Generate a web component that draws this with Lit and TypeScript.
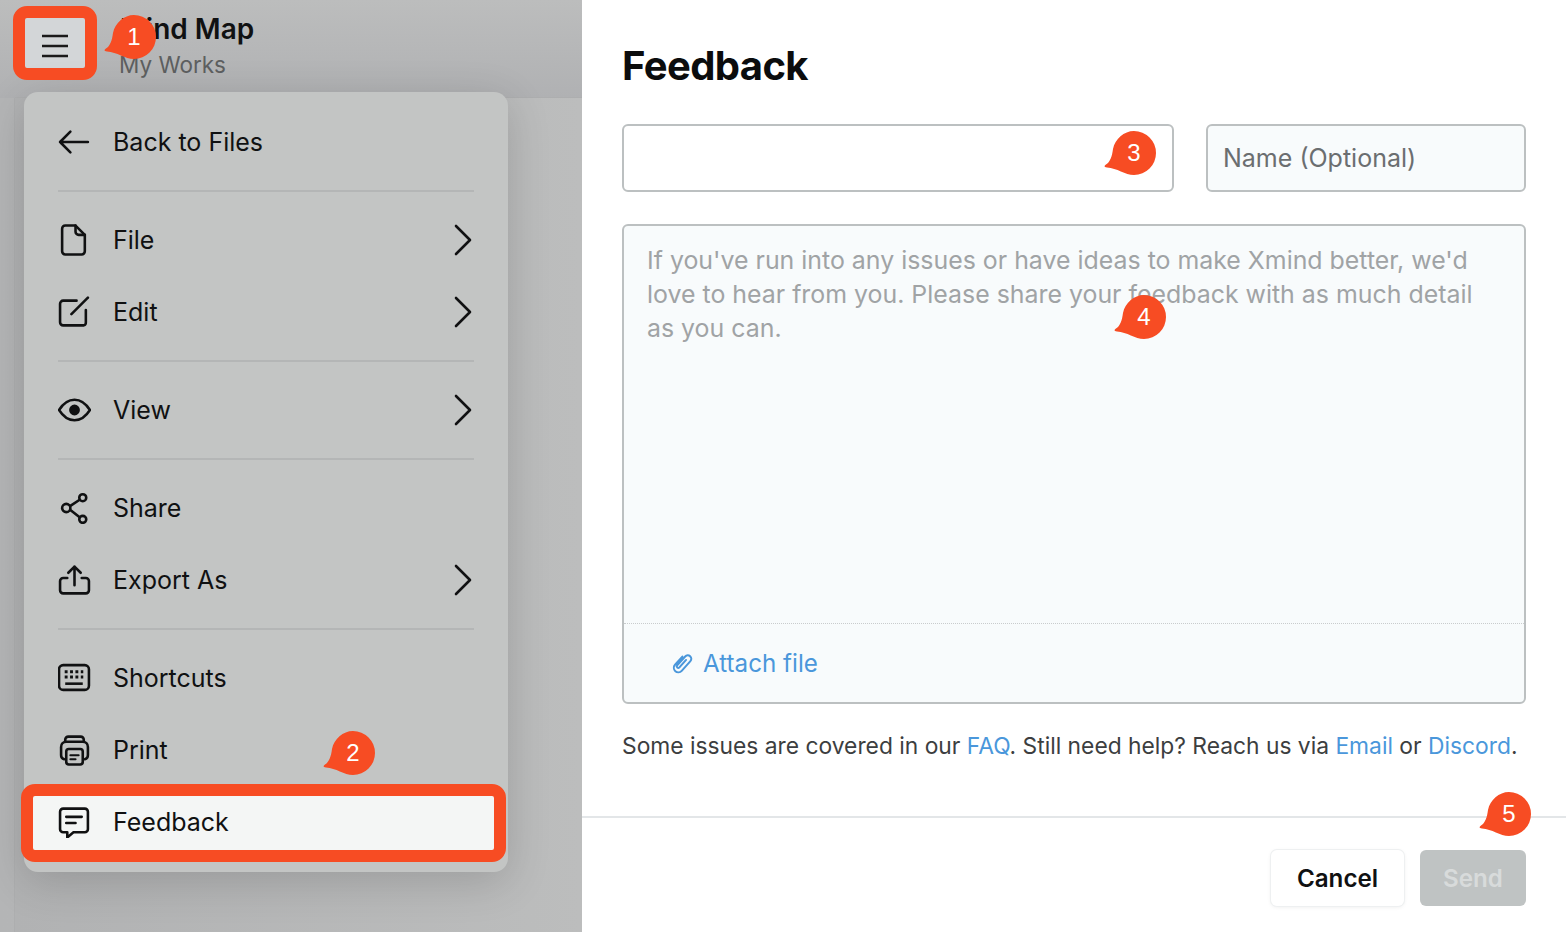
import { LitElement, html, css, svg } from 'lit';
import { customElement, property } from 'lit/decorators.js';

const icons: Record<string, unknown> = {
  back: svg`<path d="M2 15h27M12 5 2 15l10 10" />`,
  file: svg`<path d="M7 1h10l9 9v16a3 3 0 0 1-3 3H7a3 3 0 0 1-3-3V4a3 3 0 0 1 3-3Z" /><path d="M17 1v6a3 3 0 0 0 3 3h6" />`,
  edit: svg`<path d="M18 4H5a3 3 0 0 0-3 3v18a3 3 0 0 0 3 3h20a3 3 0 0 0 2-3V13" /><path d="M13 17 29 1" />`,
  view: svg`<path d="M1 15C6 7 11 5 16 5s10 2 15 10c-5 8-10 10-15 10S6 23 1 15Z" /><circle cx="16" cy="15" r="4" fill="currentColor" />`,
  share: svg`<circle cx="24" cy="5" r="3.4" /><circle cx="8" cy="15" r="4" /><circle cx="24" cy="26" r="3.4" /><path d="m12 13 9-6M12 17l9 7" />`,
  export: svg`<path d="M9 13H5a3 3 0 0 0-3 3v9a3 3 0 0 0 3 3h22a3 3 0 0 0 3-3v-9a3 3 0 0 0-3-3h-4" /><path d="M16 20V2M10 8l6-6 6 6" />`,
  keyboard: svg`<rect x="1" y="2.500" width="29" height="24" rx="4" /><path d="M7 20.500h17" stroke-width="2.500" stroke-linecap="butt" /><path d="M6.500 9h18M6.500 14h18" stroke-width="2.800" stroke-linecap="butt" stroke-dasharray="2.800 2.400" />`,
  print: svg`<path d="M7 7V5a3 3 0 0 1 3-3h12a3 3 0 0 1 3 3v2" /><path d="M6 24a4 4 0 0 1-3-4v-8a5 5 0 0 1 5-5h16a5 5 0 0 1 5 5v8a4 4 0 0 1-3 4" /><rect x="8" y="14" width="16" height="15" rx="2.500" /><path d="M12 20h8M12 24h5" stroke-width="2" />`,
  feedback: svg`<path d="M5 2h21a3 3 0 0 1 3 3v17a3 3 0 0 1-3 3H15l-6 5v-5H5a3 3 0 0 1-3-3V5a3 3 0 0 1 3-3Z" /><path d="M8 10h15M8 16h9" />`,
};

@customElement('tip-badge')
class TipBadge extends LitElement {
  @property() label = '';

  static styles = css`
    :host {
      position: absolute;
      display: block;
      width: 54px;
      height: 46px;
      font-family: 'Liberation Sans', sans-serif;
      z-index: 5;
    }
    svg {
      position: absolute;
      inset: 0;
      width: 54px;
      height: 46px;
    }
    span {
      position: absolute;
      left: 8px;
      top: 0;
      width: 44px;
      height: 44px;
      display: flex;
      align-items: center;
      justify-content: center;
      color: #fff;
      font-size: 24px;
    }
  `;

  render() {
    return html`
      <svg viewBox="0 0 54 46">
        <path
          fill="#f74c23"
          d="M30 0A22 22 0 1 1 30 44C21 44 13 37 3 36.500C0 36.300 0 35 2 33.500C6 31 8 26 9 18C11 8 20 0 30 0Z"
        />
      </svg>
      <span>${this.label}</span>
    `;
  }
}

@customElement('app-root')
class AppRoot extends LitElement {
  static styles = css`
    :host {
      display: block;
      position: relative;
      width: 1566px;
      height: 932px;
      overflow: hidden;
      font-family: 'Inter', 'Liberation Sans', sans-serif;
      background: #fff;
    }

    * {
      box-sizing: border-box;
    }

    .page {
      display: grid;
      grid-template-columns: 582px minmax(0, 1fr);
      height: 932px;
    }

    /* Left side, dimmed by the dialog */
    .side {
      display: flex;
      flex-direction: column;
      background: linear-gradient(90deg, #b4b5b6 0%, #b7b8b9 60%, #bcbdbd 100%);
      overflow: hidden;
    }

    .head {
      height: 98px;
      flex: none;
      display: flex;
      gap: 23px;
      padding: 18px 0 0 25px;
      background: linear-gradient(180deg, #bcbdbd, #b0b1b3);
    }

    .menu-btn {
      width: 60px;
      height: 51px;
      padding-top: 4px;
      background: #d3d6d8;
      display: flex;
      align-items: center;
      justify-content: center;
    }

    .menu-btn svg {
      width: 28px;
      height: 24px;
      stroke: #1a1a1a;
      stroke-width: 2.400;
      fill: none;
    }

    .doc-title {
      font-size: 28px;
      font-weight: 600;
      line-height: 34px;
      margin-top: -6px;
      padding-left: 12px;
      color: #101112;
      white-space: nowrap;
    }

    .doc-sub {
      font-size: 22.500px;
      line-height: 34px;
      padding-left: 11px;
      color: #5d5f60;
      margin-top: 2px;
      white-space: nowrap;
    }

    .body {
      flex: 1;
      margin-left: 15px;
      background: linear-gradient(90deg, #b1b2b3, #bcbdbd);
      box-shadow: -1px 0 0 #adaeaf, 0 -1px 0 #adaeaf;
    }

    .card {
      position: absolute;
      left: 24px;
      top: 92px;
      width: 484px;
      height: 780px;
      padding: 14px 0;
      background: #c3c5c4;
      border-radius: 14px;
      box-shadow: 0 10px 44px rgba(0, 0, 0, 0.16);
    }

    .row {
      height: 72px;
      display: flex;
      align-items: center;
      padding: 0 34px;
      font-size: 25px;
      color: #101112;
    }

    .row .ic {
      width: 33px;
      height: 32px;
      margin-right: 22px;
      flex: none;
      fill: none;
      stroke: #101112;
      stroke-width: 2.500;
      stroke-linecap: round;
      stroke-linejoin: round;
    }

    .row .label {
      flex: 1;
    }

    .row .chev {
      width: 20px;
      height: 34px;
      fill: none;
      stroke: #101112;
      stroke-width: 2.600;
      stroke-linecap: round;
      stroke-linejoin: round;
    }

    .sep {
      height: 2px;
      margin: 12px 34px;
      background: #b4b6b6;
    }

    .hl {
      position: absolute;
      border: 12px solid #f74c23;
      pointer-events: none;
    }

    .hl.menu {
      left: 13px;
      top: 6px;
      width: 84px;
      height: 74px;
      border-radius: 14px;
    }

    .hl.item {
      left: 21px;
      top: 784px;
      width: 485px;
      height: 78px;
      border-radius: 14px;
    }

    .row.active {
      background: #f4f6f5;
      margin: 8px 14px 8px 9px;
      height: 56px;
      padding: 0 25px;
    }

    /* Feedback dialog */
    .dialog {
      display: flex;
      flex-direction: column;
      background: #fff;
      min-width: 0;
    }

    .content {
      padding: 40px 40px 0;
      flex: 1;
      color: #101112;
    }

    h1 {
      margin: 0;
      font-size: 40px;
      line-height: 52px;
      font-weight: 700;
      letter-spacing: -0.600px;
      color: #0b0c0d;
    }

    .fields {
      display: grid;
      grid-template-columns: 552px 320px;
      gap: 32px;
      margin-top: 32px;
    }

    .field {
      height: 68px;
      border: 2px solid #bcc0c1;
      border-radius: 6px;
      padding: 0 15px;
      display: flex;
      align-items: center;
      font-size: 25px;
      color: #6b6e70;
    }

    .field.tint {
      background: #f8fbfc;
    }

    .area {
      margin-top: 32px;
      height: 480px;
      border: 2px solid #bcc0c1;
      border-radius: 6px;
      background: #f8fbfc;
      display: flex;
      flex-direction: column;
    }

    .hint {
      flex: 1;
      padding: 17px 40px 0 23px;
      font-size: 24.900px;
      line-height: 34px;
      color: #a0a3a5;
      border-bottom: 1px dotted #c9cccd;
    }

    .attach {
      height: 78px;
      flex: none;
      display: flex;
      align-items: center;
      gap: 10px;
      padding-left: 47px;
      font-size: 24.200px;
      color: #4a97db;
    }

    .attach svg {
      width: 22px;
      height: 24px;
      fill: none;
      stroke: #4a97db;
      stroke-width: 2;
      stroke-linecap: round;
    }

    .help {
      margin: 27px 0 0;
      font-size: 22.800px;
      line-height: 30px;
      color: #3c3e40;
      white-space: nowrap;
    }

    .help a {
      color: #4a97db;
      text-decoration: none;
    }

    .foot {
      height: 116px;
      flex: none;
      border-top: 2px solid #e3e6e8;
      display: flex;
      justify-content: flex-end;
      align-items: flex-start;
      gap: 16px;
      padding: 32px 40px 0 0;
    }

    .btn {
      height: 56px;
      border-radius: 6px;
      display: flex;
      align-items: center;
      justify-content: center;
      font-size: 24.200px;
      font-weight: 600;
    }

    .btn.cancel {
      width: 133px;
      background: #fff;
      color: #101112;
      box-shadow: 0 0 0 1px #eef0f1, 0 1px 4px rgba(0, 0, 0, 0.08);
    }

    .btn.send {
      width: 106px;
      background: #bfc3c3;
      color: #d8dbdb;
    }

    .b1 { left: 104px; top: 15px; }
    .b2 { left: 323px; top: 731px; }
    .b3 { left: 1104px; top: 131px; }
    .b4 { left: 1114px; top: 295px; }
    .b5 { left: 1479px; top: 792px; }
  `;

  row(icon: string, label: string, more = false, active = false) {
    return html`
      <div class="row ${active ? 'active' : ''}">
        <svg class="ic" viewBox="0 0 32 30">${icons[icon]}</svg>
        <span class="label">${label}</span>
        ${more
          ? html`<svg class="chev" viewBox="0 0 20 34"><path d="M2 3l14 14L2 31" /></svg>`
          : ''}
      </div>
    `;
  }

  render() {
    return html`
      <div class="page">
        <section class="side">
          <div class="head">
            <div class="menu-btn">
              <svg viewBox="0 0 28 24">
                <path d="M1 2h26M1 12h26M1 22h26" />
              </svg>
            </div>
            <div>
              <div class="doc-title">Mind Map</div>
              <div class="doc-sub">My Works</div>
            </div>
          </div>
          <div class="body"></div>
          <nav class="card">
            ${this.row('back', 'Back to Files')}
            <div class="sep"></div>
            ${this.row('file', 'File', true)}
            ${this.row('edit', 'Edit', true)}
            <div class="sep"></div>
            ${this.row('view', 'View', true)}
            <div class="sep"></div>
            ${this.row('share', 'Share')}
            ${this.row('export', 'Export As', true)}
            <div class="sep"></div>
            ${this.row('keyboard', 'Shortcuts')}
            ${this.row('print', 'Print')}
            ${this.row('feedback', 'Feedback', false, true)}
          </nav>
        </section>

        <section class="dialog">
          <div class="content">
            <h1>Feedback</h1>
            <div class="fields">
              <div class="field"></div>
              <div class="field tint">Name (Optional)</div>
            </div>
            <div class="area">
              <div class="hint">
                If you've run into any issues or have ideas to make Xmind better, we'd
                love to hear from you. Please share your feedback with as much detail
                as you can.
              </div>
              <div class="attach">
                <svg viewBox="0 0 22 24">
                  <path
                    transform="rotate(42 11 12)"
                    d="M7 7v11a4.500 4.500 0 0 0 9 0V5a3.500 3.500 0 0 0-7 0v12a1.500 1.500 0 0 0 3 0V7"
                  />
                </svg>
                Attach file
              </div>
            </div>
            <p class="help">
              Some issues are covered in our <a>FAQ</a>. Still need help? Reach us via
              <a>Email</a> or <a>Discord</a>.
            </p>
          </div>
          <div class="foot">
            <div class="btn cancel">Cancel</div>
            <div class="btn send">Send</div>
          </div>
        </section>
      </div>

      <div class="hl menu"></div>
      <div class="hl item"></div>
      <tip-badge class="b1" label="1"></tip-badge>
      <tip-badge class="b2" label="2"></tip-badge>
      <tip-badge class="b3" label="3"></tip-badge>
      <tip-badge class="b4" label="4"></tip-badge>
      <tip-badge class="b5" label="5"></tip-badge>
    `;
  }
}
